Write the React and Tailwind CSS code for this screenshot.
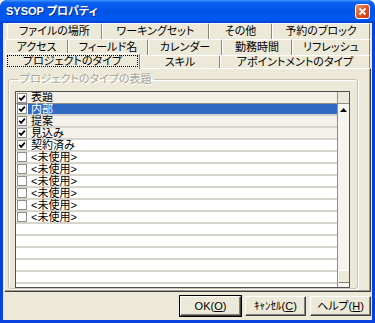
import React from 'react';

const row1 = [
    { label: 'ファイルの場所', w: 'w-[95px]' },
    { label: 'ワーキングセット', w: 'w-[107px]' },
    { label: 'その他', w: 'w-[63px]' },
    { label: '予約のブロック', w: 'w-[98px]' },
];
const row2 = [
    { label: 'アクセス', w: 'w-[63px]' },
    { label: 'フィールド名', w: 'w-[80px]' },
    { label: 'カレンダー', w: 'w-[74px]' },
    { label: '勤務時間', w: 'w-[70px]' },
    { label: 'リフレッシュ', w: 'w-[78px]' },
];

const items = [
    { label: '内部', checked: true, selected: true },
    { label: '提案', checked: true, shaded: true },
    { label: '見込み', checked: true, shaded: true },
    { label: '契約済み', checked: true },
    { label: '<未使用>' },
    { label: '<未使用>' },
    { label: '<未使用>' },
    { label: '<未使用>' },
    { label: '<未使用>' },
    { label: '<未使用>' },
    { label: '' },
    { label: '' },
    { label: '' },
    { label: '' },
    { label: '' },
    { label: '' },
];

const Tab = ({ label, w }) => (
    <div className={`${w} h-full border-t border-l border-white border-r border-r-[#8a877a] rounded-tl-[2px] rounded-tr-[2px] bg-[#ECE9D8] flex items-center justify-center`}>
        <span className="leading-none">{label}</span>
    </div>
);

const Check = ({ checked }) => (
    <div className="w-[10px] h-[10px] ml-[1px] shrink-0 border border-[#8e8e8e] bg-white flex items-center justify-center">
        {checked && (
            <svg width="8" height="8" viewBox="0 0 8 8">
                <path d="M1.2 3.8 L3.1 5.9 L6.9 1.6" stroke="#000" strokeWidth="1.7" fill="none" />
            </svg>
        )}
    </div>
);

const Button = ({ children, isDefault }) => (
    <button
        type="button"
        className={`w-[61px] h-[20px] bg-[#ECE9D8] text-[11px] leading-none flex items-center justify-center border border-t-white border-l-white border-r-[#404040] border-b-[#404040] shadow-[inset_-1px_-1px_0_#808080] ${isDefault ? 'outline outline-1 outline-black' : ''}`}
    >
        {children}
    </button>
);

const App = () => {
    return (
        <div className="w-[375px] h-[323px] bg-[#0842DE] rounded-t-[7px] flex flex-col overflow-hidden font-['Liberation_Sans','Noto_Sans_CJK_JP',sans-serif] [font-feature-settings:'palt'] text-black">
            {/* タイトルバー */}
            <div className="h-[23px] shrink-0 flex items-center justify-between pl-[6px] pr-[5px] bg-[linear-gradient(to_bottom,#3D95FF_0%,#0A5FF0_12%,#0054E8_50%,#0059F2_85%,#003FD0_100%)]">
                <span className="text-white font-bold text-[11px] [text-shadow:1px_1px_0_#0A2E9A]">
                    SYSOP プロパティ
                </span>
                <div className="w-[15px] h-[15px] rounded-[3px] border border-white bg-[linear-gradient(135deg,#F0926A,#DB4A1C_60%,#C53A10)] flex items-center justify-center">
                    <svg width="9" height="9" viewBox="0 0 9 9">
                        <path d="M1.5 1.5 L7.5 7.5 M7.5 1.5 L1.5 7.5" stroke="#fff" strokeWidth="1.8" />
                    </svg>
                </div>
            </div>

            <div className="flex-1 mx-[3px] mb-[3px] bg-[#ECE9D8] flex flex-col text-[11px]">
                {/* タブ */}
                <div className="h-[16px] flex ml-[4px]">
                    {row1.map(t => <Tab key={t.label} {...t} />)}
                </div>
                <div className="h-[16px] flex ml-[2px]">
                    {row2.map(t => <Tab key={t.label} {...t} />)}
                </div>
                <div className="h-[13px] flex ml-[2px]">
                    <div className="relative z-10 w-[135px] h-[16px] mt-[-2px] border-t border-l border-white border-r border-r-[#8a877a] rounded-tl-[2px] rounded-tr-[2px] bg-[#ECE9D8] p-[1px]">
                        <div className="h-[12px] border border-dotted border-black flex items-center justify-center">
                            <span className="leading-none">プロジェクトのタイプ</span>
                        </div>
                    </div>
                    <Tab label="スキル" w="w-[80px]" />
                    <Tab label="アポイントメントのタイプ" w="w-[150px]" />
                </div>

                {/* タブページ */}
                <div className="h-[224px] mx-[1px] border border-t-white border-l-white border-r-[#404040] border-b-[#404040] shadow-[inset_-1px_-1px_0_#9c9a8f] pl-[3px] pr-[12px] pt-[5px]">
                    <fieldset className="border border-[#C5C2B2] rounded-[3px] shadow-[inset_1px_1px_0_#fff,1px_1px_0_#fff] pl-[6px] pr-[7px] pt-[6px]">
                        <legend className="ml-[3px] px-[2px] leading-[11px] text-[#A7A49A] [text-shadow:1px_1px_0_#fff]">
                            プロジェクトのタイプの表題
                        </legend>
                        <div className="h-[197px] border border-[#505050] bg-white flex overflow-hidden">
                            <div className="flex-1 flex flex-col">
                                <div className="h-[12px] shrink-0 border-b border-[#8f8d85] bg-[#F1EFE6] flex items-center">
                                    <Check checked />
                                    <span className="ml-[4px] leading-none">表題</span>
                                </div>
                                {items.map((item, i) => (
                                    <div
                                        key={i}
                                        className={`h-[12px] shrink-0 border-b-2 border-[#D7D4CB] flex items-center ${item.shaded ? 'bg-[#F3F1EA]' : 'bg-white'}`}
                                    >
                                        {item.label && <Check checked={item.checked} />}
                                        {item.label && (
                                            <div className={`flex-1 h-full ml-[1px] pl-[3px] flex items-center ${item.selected ? 'bg-[#316AC5] text-white' : ''}`}>
                                                <span className="leading-none">{item.label}</span>
                                            </div>
                                        )}
                                    </div>
                                ))}
                            </div>
                            <div className="w-[12px] shrink-0 border-l border-[#8f8d85] flex flex-col">
                                <div className="h-[12px] shrink-0 border-b border-[#8f8d85] bg-[#ECE9D8]" />
                                <div className="flex-1 bg-[#F6F5F0] flex flex-col items-center">
                                    <svg width="7" height="4" viewBox="0 0 7 4" className="mt-[4px]">
                                        <path d="M3.5 0 L7 4 L0 4 Z" fill="#000" />
                                    </svg>
                                    <div className="mt-auto mb-[4px] w-[12px] h-[13px] border border-t-white border-l-white border-r-[#808080] border-b-[#808080] bg-[#ECE9D8]" />
                                </div>
                            </div>
                        </div>
                    </fieldset>
                </div>

                {/* ボタン */}
                <div className="flex-1 flex items-center justify-end gap-[4px] pr-[1px]">
                    <Button isDefault>OK(<u>O</u>)</Button>
                    <Button>ｷｬﾝｾﾙ(<u>C</u>)</Button>
                    <Button>ヘルプ(<u>H</u>)</Button>
                </div>
            </div>
        </div>
    );
};

export default App;
